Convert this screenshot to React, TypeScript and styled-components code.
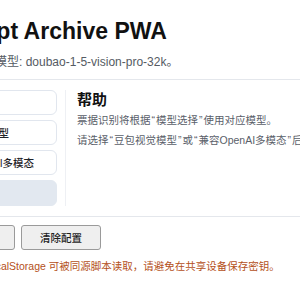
import styled, { createGlobalStyle } from 'styled-components';

const GlobalStyle = createGlobalStyle`
  html, body {
    margin: 0;
    padding: 0;
    background: #ffffff;
    overflow: hidden;
  }
  body {
    font-family: 'Liberation Sans', 'Noto Sans CJK SC', sans-serif;
    color: #1f2328;
  }
`;

const Page = styled.div`
  width: 640px;
  margin-left: -65px;
  padding-top: 16px;
`;

const Header = styled.header`
  padding-bottom: 8px;
  border-bottom: 1px solid #e4e7ec;
`;

const Title = styled.h1`
  margin: 0;
  font-size: 23px;
  line-height: 30px;
  font-weight: 700;
  color: #111111;
`;

const Subtitle = styled.p`
  margin: 7px 0 0;
  font-size: 12px;
  line-height: 18px;
  color: #555b63;
`;

const Body = styled.div`
  display: flex;
  margin-top: 10px;
`;

const Nav = styled.nav`
  width: 122px;
  display: flex;
  flex-direction: column;
  gap: 5px;
  margin-right: 8px;
`;

const NavItem = styled.button<{ $active?: boolean }>`
  height: 25px;
  padding: 0 10px;
  text-align: left;
  font-family: inherit;
  font-size: 10.5px;
  font-weight: 500;
  color: #1f2328;
  background: ${({ $active }) => ($active ? '#e2e8f0' : '#ffffff')};
  border: 1px solid ${({ $active }) => ($active ? '#e2e8f0' : '#e1e6ee')};
  border-radius: 6px;
  white-space: nowrap;
  &:last-child {
    height: 26px;
  }
`;

const Panel = styled.section`
  flex: 1;
  border-left: 1px solid #eef0f4;
  padding-left: 11px;
`;

const PanelTitle = styled.h3`
  margin: 0;
  font-size: 15px;
  line-height: 20px;
  font-weight: 700;
  color: #111111;
`;

const HelpText = styled.p`
  margin: 0;
  font-size: 10.5px;
  line-height: 20px;
  color: #5a6069;
  white-space: nowrap;
`;

const Quoted = styled.span`
  &::before {
    content: '“';
    margin: 0 1px 0 1px;
  }
  &::after {
    content: '”';
    margin: 0 1px 0 1px;
  }
`;

const Footer = styled.div`
  margin-top: 10px;
  border-top: 1px solid #e4e7ec;
  padding-top: 8px;
`;

const Actions = styled.div`
  display: flex;
  gap: 6px;
`;

const ActionButton = styled.button`
  width: 80px;
  height: 25px;
  font-family: inherit;
  font-size: 10.5px;
  font-weight: 500;
  color: #1f1f1f;
  background: #efefef;
  border: 1px solid #9a9a9a;
  border-radius: 3px;
`;

const Warning = styled.p`
  margin: 8px 0 0;
  font-size: 10.5px;
  line-height: 16px;
  color: #b4501a;
  white-space: nowrap;
`;

const tabs = ['基本设置', '豆包视觉模型', '兼容OpenAI多模态', '帮助'];

export default function App() {
  return (
    <>
      <GlobalStyle />
      <Page>
        <Header>
          <Title>Receipt Archive PWA</Title>
          <Subtitle>默认识别用模型: doubao-1-5-vision-pro-32k。</Subtitle>
        </Header>
        <Body>
          <Nav>
            {tabs.map((t, i) => (
              <NavItem key={t} $active={i === tabs.length - 1}>
                {i === tabs.length - 1 ? '' : t}
              </NavItem>
            ))}
          </Nav>
          <Panel>
            <PanelTitle>帮助</PanelTitle>
            <HelpText>
              票据识别将根据<Quoted>模型选择</Quoted>使用对应模型。
            </HelpText>
            <HelpText>
              请选择<Quoted>豆包视觉模型</Quoted>或<Quoted>兼容OpenAI多模态</Quoted>后填写对应的接口地址与密钥。
            </HelpText>
          </Panel>
        </Body>
        <Footer>
          <Actions>
            <ActionButton>保存配置</ActionButton>
            <ActionButton>清除配置</ActionButton>
          </Actions>
          <Warning>密钥保存在localStorage 可被同源脚本读取，请避免在共享设备保存密钥。</Warning>
        </Footer>
      </Page>
    </>
  );
}
